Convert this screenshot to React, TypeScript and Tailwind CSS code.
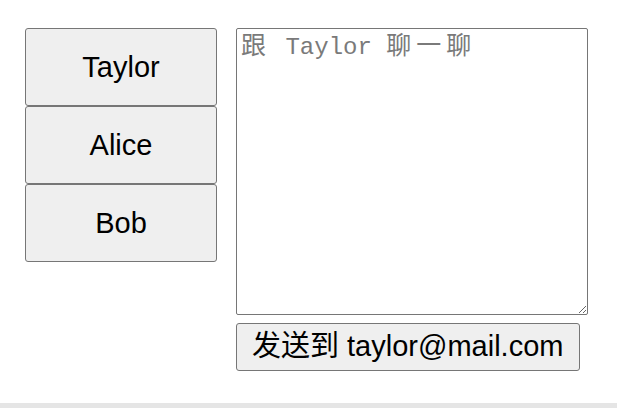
import React from "react";

export default function App() {
  const btn =
    "w-[192px] h-[78px] bg-[#efefef] border border-[#767676] rounded-[3px] text-[29px] text-black flex items-center justify-center pt-[1px]";
  const cjk = "text-[25px] tracking-[5px]";
  return (
    <div
      className="w-[617px] h-[408px] bg-white flex flex-col overflow-hidden"
      style={{ fontFamily: '"Liberation Sans", Arial, "Noto Sans CJK SC", sans-serif' }}
    >
      <div className="flex pl-[25px] pt-[28px]">
        <div className="flex flex-col">
          <button className={btn}>Taylor</button>
          <button className={btn}>Alice</button>
          <button className={btn}>Bob</button>
        </div>
        <div className="flex flex-col ml-[19px]">
          <div className="relative w-[352px] h-[287px]">
            <textarea
              aria-label="跟 Taylor 聊一聊"
              className="w-[352px] h-[287px] block border border-[#767676] rounded-[2px] px-[4px] py-[3px] text-[24px] outline-none"
              style={{ fontFamily: '"Liberation Mono", "Courier New", "Noto Sans CJK SC", monospace' }}
            />
            <div
              className="absolute left-[5px] top-[6px] pointer-events-none whitespace-pre text-[24px] leading-[28px] text-[#7a7a7a]"
              style={{ fontFamily: '"Liberation Mono", "Courier New", "Noto Sans CJK SC", monospace' }}
            >
              <span className={cjk}>跟</span>
              <span> Taylor </span>
              <span className={cjk}>聊一聊</span>
            </div>
          </div>
          <button className="mt-[8px] self-start h-[48px] pl-[15px] pr-[16px] bg-[#efefef] border border-[#767676] rounded-[3px] text-[29px] text-black flex items-center whitespace-nowrap">
            发送到 taylor@mail.com
          </button>
        </div>
      </div>
      <div className="mt-[32px] h-[10px] bg-[#e5e5e5] w-full" />
    </div>
  );
}
